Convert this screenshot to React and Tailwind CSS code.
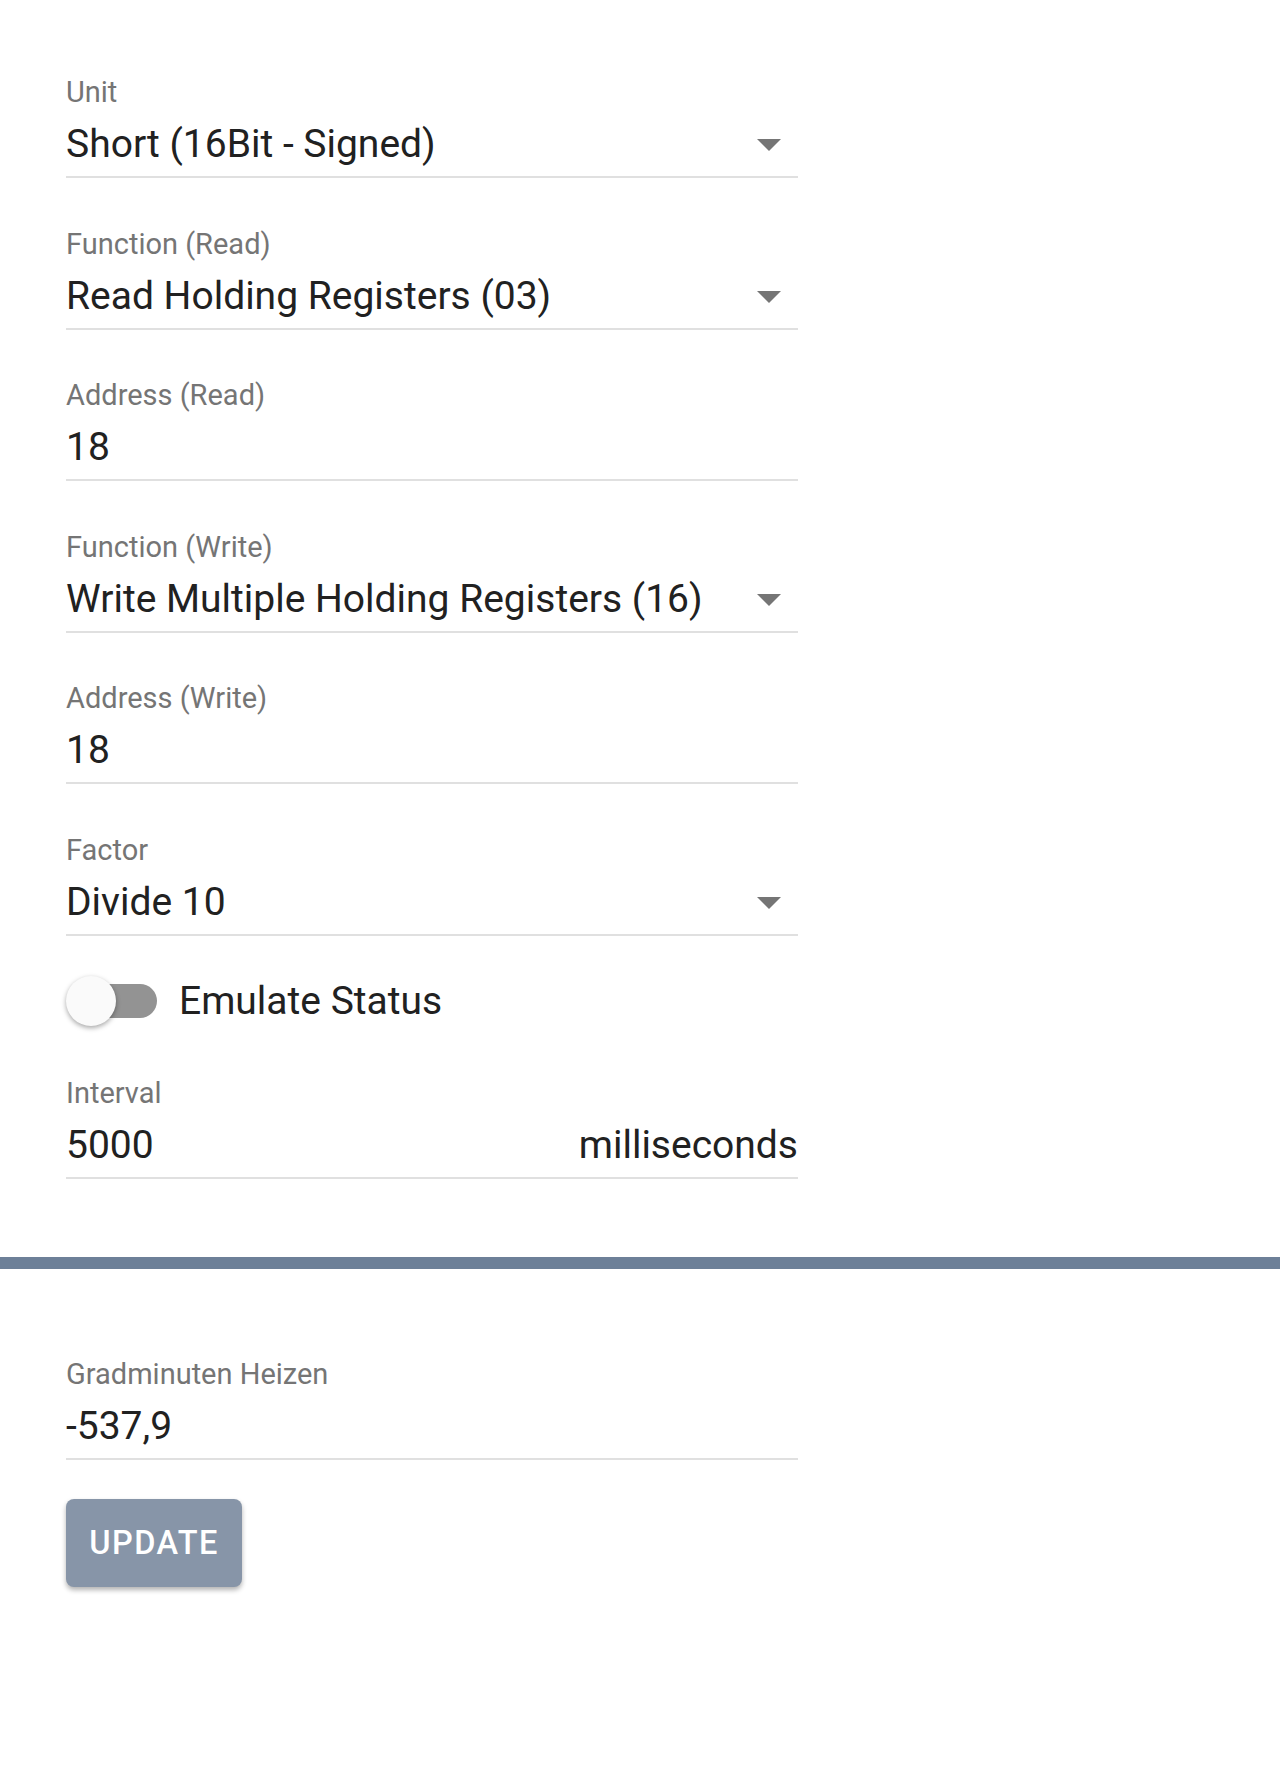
import React from "react";

const font = { fontFamily: "Roboto, 'Noto Sans', sans-serif" };

function Caret() {
  return (
    <svg width="24" height="12" viewBox="0 0 24 12" className="shrink-0 mr-[17px] mt-[2px]">
      <path d="M0 0 L24 0 L12 12 Z" fill="#757575" />
    </svg>
  );
}

function Field({ label, value, select, suffix }) {
  return (
    <div className="w-[732px]">
      <div className="text-[29px] leading-[34px] text-[#757575]">{label}</div>
      <div className="mt-[12px] flex items-center justify-between border-b-[2px] border-[#e0e0e0] pb-[9px]">
        <span className="text-[39px] leading-[46px] text-[#212121]">{value}</span>
        {select && <Caret />}
        {suffix && <span className="text-[39px] leading-[46px] text-[#212121]">{suffix}</span>}
      </div>
    </div>
  );
}

export default function App() {
  return (
    <div className="w-[1280px] min-h-[1785px] bg-white" style={font}>
      <div className="pl-[66px] pt-[75px] flex flex-col gap-[48.5px]">
        <Field label="Unit" value="Short (16Bit - Signed)" select />
        <Field label="Function (Read)" value="Read Holding Registers (03)" select />
        <Field label="Address (Read)" value="18" />
        <Field label="Function (Write)" value="Write Multiple Holding Registers (16)" select />
        <Field label="Address (Write)" value="18" />
        <Field label="Factor" value="Divide 10" select />
      </div>
      <div className="pl-[66px] mt-[40.5px] flex items-center h-[50px]">
        <div className="relative w-[91px] h-[50px] flex items-center">
          <div className="ml-[14px] w-[77px] h-[34px] rounded-full bg-[#939393]" />
          <div className="absolute left-0 top-0 w-[50px] h-[50px] rounded-full bg-[#fafafa] shadow-[0_2px_5px_rgba(0,0,0,0.35)]" />
        </div>
        <span className="ml-[22px] text-[39px] leading-[46px] text-[#212121]">Emulate Status</span>
      </div>
      <div className="pl-[66px] mt-[50px]">
        <Field label="Interval" value="5000" suffix="milliseconds" />
      </div>
      <div className="mt-[78px] h-[12px] bg-[#6d8098] w-full" />
      <div className="pl-[66px] pt-[88px]">
        <Field label="Gradminuten Heizen" value="-537,9" />
        <button className="mt-[39px] w-[176px] h-[88px] rounded-[8px] bg-[#8795a8] text-white text-[32.5px] font-medium tracking-[1.5px] shadow-[0_3px_5px_rgba(0,0,0,0.3)]">
          UPDATE
        </button>
      </div>
    </div>
  );
}
